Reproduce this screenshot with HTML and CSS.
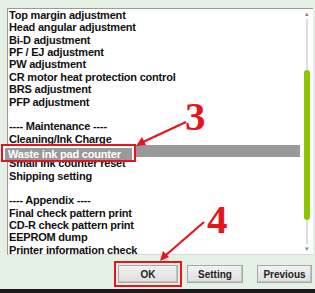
FILE: index.html
```html
<!DOCTYPE html>
<html lang="en">

<head>
    <meta charset="UTF-8" />
    <title>Service Tool</title>
    <link rel="stylesheet" href="styles.css">
</head>

<body>
    <div class="window">
        <div class="listbox">
            <ul class="items">
                <li>Top margin adjustment</li>
                <li>Head angular adjustment</li>
                <li>Bi-D adjustment</li>
                <li>PF / EJ adjustment</li>
                <li>PW adjustment</li>
                <li>CR motor heat protection control</li>
                <li>BRS adjustment</li>
                <li>PFP adjustment</li>
                <li>&nbsp;</li>
                <li>---- Maintenance ----</li>
                <li>Cleaning/Ink Charge</li>
                <li class="selected">Waste ink pad counter</li>
                <li>Small ink counter reset</li>
                <li>Shipping setting</li>
                <li>&nbsp;</li>
                <li>---- Appendix ----</li>
                <li>Final check pattern print</li>
                <li>CD-R check pattern print</li>
                <li>EEPROM dump</li>
                <li>Printer information check</li>
            </ul>
            <div class="scrollbar">
                <span class="arrow">&#9652;</span>
                <div class="track"><div class="thumb"></div></div>
                <span class="arrow">&#9662;</span>
            </div>
        </div>

        <div class="footer">
            <button class="btn ok">OK</button>
            <button class="btn setting">Setting</button>
            <button class="btn previous">Previous</button>
        </div>
    </div>
    <div class="taskbar"></div>

    <!-- callouts over the dialog -->
    <div class="callout"><span>Waste ink pad counter</span></div>
    <div class="step step3">3</div>
    <div class="step step4">4</div>
    <svg class="arrows" width="315" height="293" viewBox="0 0 315 293">
        <line x1="186" y1="122" x2="143" y2="142" stroke="#e8141c" stroke-width="2.2" />
        <polygon points="136,146 142,137 146,145" fill="#e8141c" />
        <line x1="204" y1="222" x2="166" y2="255" stroke="#e8141c" stroke-width="2.2" />
        <polygon points="160,261 163,251 169,257" fill="#e8141c" />
    </svg>
</body>

</html>
```

FILE: styles.css
```css
* {
margin: 0;
padding: 0;
box-sizing: border-box;
}

body {
width: 315px;
height: 293px;
overflow: hidden;
background: #e5f1e5;
font-family: "Liberation Sans", Arial, sans-serif;
position: relative;
}

.window {
height: 289px;
padding: 8px 2px 0 7px;
}

.listbox {
display: flex;
height: 247px;
background: #fff;
border-top: 1px solid #9a9a9a;
border-left: 1px solid #9a9a9a;
border-bottom: 1px solid #d8d8d8;
}

.items {
flex: 1;
list-style: none;
overflow: hidden;
}

.items li {
height: 12.37px;
line-height: 12.37px;
padding-left: 1px;
font-size: 11px;
letter-spacing: -0.2px;
font-weight: 700;
color: #111;
white-space: nowrap;
}

.items li.selected {
background: #999;
color: #fff;
}

.scrollbar {
width: 13px;
display: flex;
flex-direction: column;
align-items: center;
background: #fff;
}

.arrow {
font-size: 7px;
line-height: 10px;
height: 10px;
color: #888;
}

.track {
flex: 1;
width: 6px;
position: relative;
background: linear-gradient(to right, transparent 2px, #dcdcdc 2px, #dcdcdc 4px, transparent 4px);
}

.thumb {
margin-top: 51px;
height: 150px;
width: 6px;
border-radius: 3px;
background: #8cc602;
}

.footer {
display: flex;
padding-top: 10px;
padding-left: 111px;
}

.btn {
height: 18px;
font-family: "Liberation Sans", Arial, sans-serif;
font-size: 10px;
font-weight: 700;
color: #222;
background: linear-gradient(#f2f2f2, #dedede);
border: 1px solid #a8a8a8;
box-shadow: inset -1px -1px 0 #c4c4c4;
}

.ok {
width: 60px;
outline: 2px solid #e8141c;
outline-offset: 2px;
}

.setting {
width: 56px;
margin-left: 9px;
}

.previous {
width: 55px;
margin-left: 14px;
}

.taskbar {
height: 4px;
background: #1a1a1a;
}

.callout {
position: absolute;
left: 1px;
top: 144px;
width: 135px;
height: 18px;
padding: 2px 2px;
background: #fff;
border: 2px solid #e8141c;
}

.callout span {
display: block;
height: 12px;
line-height: 12px;
padding-left: 3px;
background: #999;
color: #fff;
font-size: 11px;
letter-spacing: -0.2px;
font-weight: 700;
white-space: nowrap;
}

.step {
position: absolute;
font-family: "Liberation Serif", "Times New Roman", serif;
font-weight: 700;
font-size: 41px;
line-height: 1;
color: #e8141c;
}

.step3 {
left: 185px;
top: 96px;
}

.step4 {
left: 207px;
top: 199px;
}

.arrows {
position: absolute;
left: 0;
top: 0;
}
```
